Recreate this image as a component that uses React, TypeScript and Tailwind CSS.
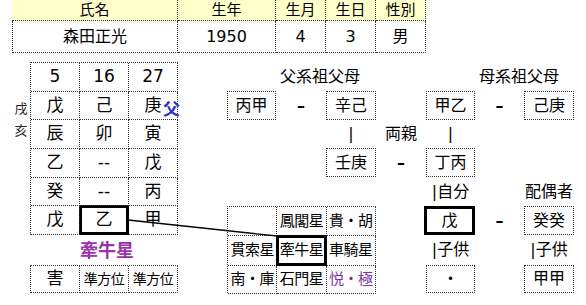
import React from "react";

const font = "font-['DejaVu_Sans','Noto_Sans_CJK_JP',sans-serif]";

// dotted box used for the family tree cells
const Box = ({ className, children }: { className: string; children?: React.ReactNode }) => (
  <div
    className={`${className} flex items-center justify-center border border-dotted border-[#333] text-[16px]`}
  >
    {children}
  </div>
);

const Dash = ({ className }: { className: string }) => (
  <div className={`${className} flex items-center justify-center text-[16px] font-bold`}>–</div>
);

const leftRows = [
  ["5", "16", "27"],
  ["戊", "己", "庚"],
  ["辰", "卯", "寅"],
  ["乙", "--", "戊"],
  ["癸", "--", "丙"],
  ["戊", "乙", "甲"],
];

export default function App() {
  return (
    <div
      className={`${font} relative grid h-[305px] w-[586px] grid-cols-[12px_18px_49px_49px_50px_49px_49px_50px_50px_50px_49px_49px_50px_12px] grid-rows-[21px_32px_9px_29px_29px_28px_29px_29px_29px_30px_28px_12px] overflow-hidden bg-white text-black`}
    >
      {/* profile table */}
      <div className="col-span-9 col-start-2 row-span-2 row-start-1 grid grid-cols-[166px_98px_50px_50px_50px] grid-rows-[21px_32px]">
        {["氏名", "生年", "生月", "生日", "性別"].map((h) => (
          <div
            key={h}
            className="flex items-center justify-center border-r border-b border-dotted border-[#333] bg-[#ffffcc] text-[15px]"
          >
            {h}
          </div>
        ))}
        <div className="flex items-center justify-center border-x border-b border-dotted border-[#333] text-[16px]">
          森田正光
        </div>
        {["1950", "4", "3", "男"].map((v, i) => (
          <div
            key={i}
            className="flex items-center justify-center border-r border-b border-dotted border-[#333] text-[16px]"
          >
            {v}
          </div>
        ))}
      </div>

      {/* side labels */}
      <div className="col-start-2 row-span-2 row-start-5 flex flex-col items-center justify-center text-[13px] leading-[22px] text-[#222]">
        <span>戌</span>
        <span>亥</span>
      </div>

      {/* left pillar grid */}
      <div className="col-span-3 col-start-3 row-span-6 row-start-4 grid grid-cols-3 grid-rows-6 border-t border-l border-dotted border-[#333] text-[17px]">
        {leftRows.map((row, r) =>
          row.map((v, c) =>
            r === 5 && c === 1 ? (
              <div
                key={`${r}-${c}`}
                className="-mt-px -ml-px flex items-center justify-center border-[3px] border-solid border-black"
              >
                {v}
              </div>
            ) : (
              <div
                key={`${r}-${c}`}
                className="relative flex items-center justify-center border-r border-b border-dotted border-[#333]"
              >
                {v}
                {r === 1 && c === 2 && (
                  <span className="absolute right-[-3px] bottom-[1px] text-[17px] leading-none font-bold text-[#2f2fc8]">
                    父
                  </span>
                )}
              </div>
            )
          )
        )}
      </div>

      <div className="col-start-4 row-start-10 flex items-center pl-px text-[18px] font-bold whitespace-nowrap text-[#9a32a8]">
        牽牛星
      </div>

      <div className="col-span-3 col-start-3 row-start-11 grid grid-cols-3 border-t border-l border-dotted border-[#333]">
        <div className="flex items-center justify-center border-r border-b border-dotted border-[#333] text-[17px]">害</div>
        <div className="flex items-center justify-center border-r border-b border-dotted border-[#333] text-[14px] tracking-[-0.5px]">準方位</div>
        <div className="flex items-center justify-center border-r border-b border-dotted border-[#333] text-[14px] tracking-[-0.5px]">準方位</div>
      </div>

      {/* star grid */}
      <div className="col-span-3 col-start-7 row-span-3 row-start-9 grid grid-cols-3 grid-rows-[29px_30px_28px] border-t border-l border-dotted border-[#333] text-[15px] tracking-[-0.5px]">
        <div className="border-r border-b border-dotted border-[#333]" />
        <div className="flex items-center justify-center border-r border-b border-dotted border-[#333]">鳳閣星</div>
        <div className="flex items-center justify-center border-r border-b border-dotted border-[#333]">貴・胡</div>
        <div className="flex items-center justify-center border-r border-b border-dotted border-[#333]">貫索星</div>
        <div className="-mt-px -ml-px flex items-center justify-center border-[3px] border-solid border-black">牽牛星</div>
        <div className="flex items-center justify-center border-r border-b border-dotted border-[#333]">車騎星</div>
        <div className="flex items-center justify-center border-r border-b border-dotted border-[#333]">南・庫</div>
        <div className="flex items-center justify-center border-r border-b border-dotted border-[#333]">石門星</div>
        <div className="flex items-center justify-center border-r border-b border-dotted border-[#333] text-[#7a2fa8]">悦・極</div>
      </div>

      {/* family tree */}
      <div className="col-span-2 col-start-8 row-start-4 flex items-center pl-1 text-[16px] whitespace-nowrap">父系祖父母</div>
      <div className="col-span-2 col-start-12 row-start-4 flex items-center pl-1 text-[16px] whitespace-nowrap">母系祖父母</div>

      <Box className="col-start-7 row-start-5">丙甲</Box>
      <Dash className="col-start-8 row-start-5" />
      <Box className="col-start-9 row-start-5">辛己</Box>
      <Box className="col-start-11 row-start-5">甲乙</Box>
      <Dash className="col-start-12 row-start-5" />
      <Box className="col-start-13 row-start-5">己庚</Box>

      <div className="col-start-9 row-start-6 flex items-center justify-center text-[16px]">|</div>
      <div className="col-start-10 row-start-6 flex items-center justify-center text-[16px]">両親</div>
      <div className="col-start-11 row-start-6 flex items-center justify-center text-[16px]">|</div>

      <Box className="col-start-9 row-start-7">壬庚</Box>
      <Dash className="col-start-10 row-start-7" />
      <Box className="col-start-11 row-start-7">丁丙</Box>

      <div className="col-start-11 row-start-8 flex items-center justify-center text-[16px]">|自分</div>
      <div className="col-start-13 row-start-8 flex items-center justify-center text-[16px]">配偶者</div>

      <div className="col-start-11 row-start-9 -ml-0.5 flex items-center justify-center border-[3px] border-solid border-black text-[16px]">戊</div>
      <Dash className="col-start-12 row-start-9" />
      <Box className="col-start-13 row-start-9">癸癸</Box>

      <div className="col-start-11 row-start-10 flex items-center justify-center text-[16px]">|子供</div>
      <div className="col-start-13 row-start-10 flex items-center justify-center text-[16px]">|子供</div>

      <Box className="col-start-11 row-start-11">・</Box>
      <Box className="col-start-13 row-start-11">甲甲</Box>

      {/* connector from 乙 to 牽牛星 */}
      <svg className="pointer-events-none absolute inset-0" width="586" height="305">
        <rect x="126" y="219" width="3" height="3" fill="#000" />
        <line x1="128" y1="220" x2="277" y2="236" stroke="#000" strokeWidth="1.3" />
      </svg>
    </div>
  );
}
